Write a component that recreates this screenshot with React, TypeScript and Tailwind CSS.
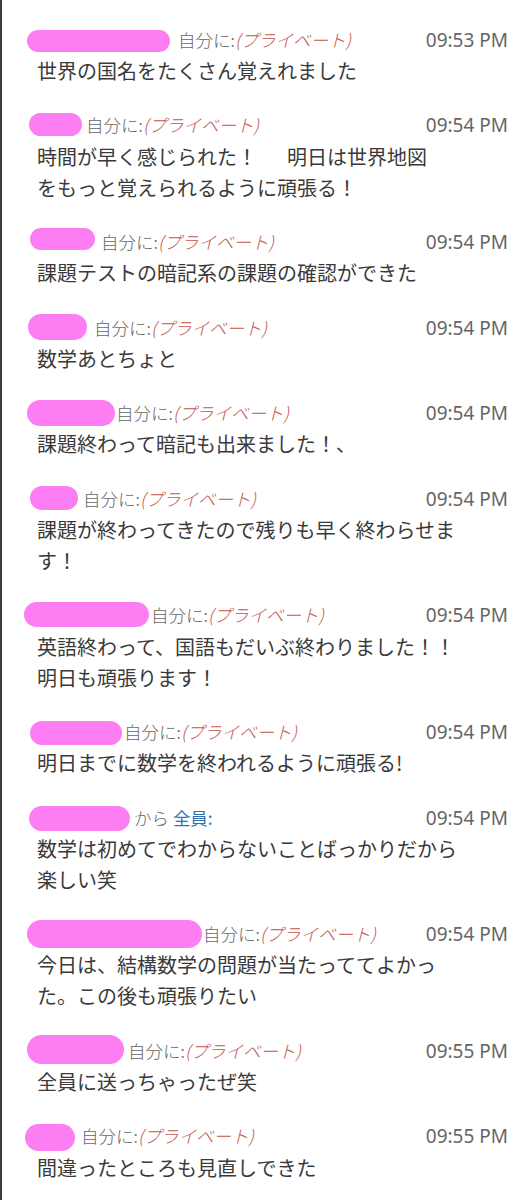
import React from 'react';

type Message = {
  blob: string; // pink scribble over the sender name
  nameWidth: string;
  toAll?: boolean;
  time: string;
  lines: React.ReactNode[];
};

const messages: Message[] = [
  {
    blob: 'left-[25px] top-[5px] w-[143px] h-[22px]',
    nameWidth: 'w-[176px]',
    time: '09:53 PM',
    lines: ['世界の国名をたくさん覚えれました'],
  },
  {
    blob: 'left-[27px] top-[2px] w-[53px] h-[23px]',
    nameWidth: 'w-[84px]',
    time: '09:54 PM',
    lines: [
      <>
        時間が早く感じられた！<span className="inline-block w-[30px]" />明日は世界地図
      </>,
      'をもっと覚えられるように頑張る！',
    ],
  },
  {
    blob: 'left-[28px] top-[1px] w-[65px] h-[22px]',
    nameWidth: 'w-[99px]',
    time: '09:54 PM',
    lines: ['課題テストの暗記系の課題の確認ができた'],
  },
  {
    blob: 'left-[26px] top-[1px] w-[59px] h-[26px]',
    nameWidth: 'w-[92px]',
    time: '09:54 PM',
    lines: ['数学あとちょと'],
  },
  {
    blob: 'left-[25px] top-[2px] w-[88px] h-[26px]',
    nameWidth: 'w-[114px]',
    time: '09:54 PM',
    lines: ['課題終わって暗記も出来ました！、'],
  },
  {
    blob: 'left-[28px] top-[2px] w-[48px] h-[24px]',
    nameWidth: 'w-[81px]',
    time: '09:54 PM',
    lines: ['課題が終わってきたので残りも早く終わらせま', 'す！'],
  },
  {
    blob: 'left-[22px] top-[1px] w-[125px] h-[25px]',
    nameWidth: 'w-[149px]',
    time: '09:54 PM',
    lines: ['英語終わって、国語もだいぶ終わりました！！', '明日も頑張ります！'],
  },
  {
    blob: 'left-[28px] top-[4px] w-[92px] h-[24px]',
    nameWidth: 'w-[122px]',
    time: '09:54 PM',
    lines: ['明日までに数学を終われるように頑張る!'],
  },
  {
    blob: 'left-[27px] top-[3px] w-[101px] h-[25px]',
    nameWidth: 'w-[132px]',
    toAll: true,
    time: '09:54 PM',
    lines: ['数学は初めてでわからないことばっかりだから', '楽しい笑'],
  },
  {
    blob: 'left-[25px] top-[1px] w-[175px] h-[28px]',
    nameWidth: 'w-[201px]',
    time: '09:54 PM',
    lines: ['今日は、結構数学の問題が当たっててよかっ', 'た。この後も頑張りたい'],
  },
  {
    blob: 'left-[25px] top-[-1px] w-[97px] h-[29px]',
    nameWidth: 'w-[126px]',
    time: '09:55 PM',
    lines: ['全員に送っちゃったぜ笑'],
  },
  {
    blob: 'left-[23px] top-[2px] w-[50px] h-[27px]',
    nameWidth: 'w-[79px]',
    time: '09:55 PM',
    lines: ['間違ったところも見直しできた'],
  },
];

const ChatMessage: React.FC<{ msg: Message }> = ({ msg }) => (
  <div>
    <div className="relative flex h-[30px] items-center pr-[24px]">
      <div className={`shrink-0 ${msg.nameWidth}`} />
      {msg.toAll ? (
        <span className="text-[17.5px] font-light text-[#666]">
          から <span className="font-normal text-[#2f73b5]">全員:</span>
        </span>
      ) : (
        <span className="text-[17.5px] font-light text-[#666]">
          自分に:<span className="italic text-[#c4534c]">(プライベート)</span>
        </span>
      )}
      <span className="ml-auto font-['Noto_Sans',sans-serif] text-[19px] text-[#666]">{msg.time}</span>
      <div className={`absolute rounded-full bg-[#fd7ef3] ${msg.blob}`} />
    </div>
    <div className="pl-[35px] text-[20px] leading-[31px] text-[#3a3a3a]">
      {msg.lines.map((line, i) => (
        <div key={i}>{line}</div>
      ))}
    </div>
  </div>
);

export default function App() {
  return (
    <div className="min-h-[1200px] border-l-2 border-[#3a3a3a] bg-white pt-[25px] font-['Noto_Sans_CJK_JP',sans-serif]">
      <div className="flex flex-col gap-[24.6px]">
        {messages.map((m, i) => (
          <ChatMessage key={i} msg={m} />
        ))}
      </div>
    </div>
  );
}
